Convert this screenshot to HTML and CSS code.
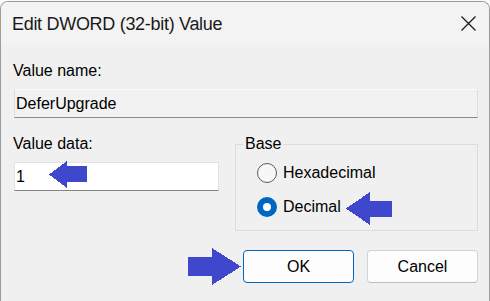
FILE: index.html
```html
<!DOCTYPE html>
<html lang="en">
<head>
  <meta charset="UTF-8">
  <title>Edit DWORD (32-bit) Value</title>
  <link rel="stylesheet" href="styles.css">
</head>
<body>

  <div class="dialog">
    <div class="titlebar">
      <span class="title">Edit DWORD (32-bit) Value</span>
      <svg class="close" width="15" height="15" viewBox="0 0 15 15">
        <path d="M0.5 0.5 L14.5 14.5 M14.5 0.5 L0.5 14.5" stroke="#1b1b1b" stroke-width="1.3" fill="none"/>
      </svg>
    </div>

    <div class="content">
      <div class="label">Value name:</div>
      <div class="field readonly">DeferUpgrade</div>

      <div class="row">
        <div class="col-data">
          <div class="label">Value data:</div>
          <div class="field">1</div>
        </div>

        <fieldset class="base">
          <legend>Base</legend>
          <div class="radio">
            <span class="dot"></span>
            <span>Hexadecimal</span>
          </div>
          <div class="radio checked">
            <span class="dot"></span>
            <span>Decimal</span>
          </div>
        </fieldset>
      </div>

      <div class="buttons">
        <div class="btn primary">OK</div>
        <div class="btn">Cancel</div>
      </div>
    </div>
  </div>

  <!-- annotation arrows drawn over the dialog -->
  <svg class="arrow arrow-data" width="38" height="27" viewBox="0 0 38 27" shape-rendering="crispEdges">
    <polygon points="0,13.5 18,0 18,5 38,5 38,21 18,21 18,27"/>
  </svg>
  <svg class="arrow arrow-decimal" width="46" height="33" viewBox="0 0 46 33" shape-rendering="crispEdges">
    <polygon points="0,16.5 24,0 24,9 46,9 46,25 24,25 24,33"/>
  </svg>
  <svg class="arrow arrow-ok" width="53" height="37" viewBox="0 0 53 37" shape-rendering="crispEdges">
    <polygon points="0,9 24,9 24,0 53,18.5 24,37 24,28 0,28"/>
  </svg>

</body>
</html>
```

FILE: styles.css
```css
body {
  margin: 0;
  padding: 0;
  font-family: 'Liberation Sans', Arial, sans-serif;
  background-color: #fafafa;
  color: #000;
  position: relative;
  overflow: hidden;
}

.dialog {
  box-sizing: border-box;
  width: 490px;
  height: 300px;
  margin-top: 1px;
  border: 1px solid #9c9c9c;
  border-bottom: none;
  border-radius: 8px 8px 0 0;
  background-color: #f0f0f0;
  overflow: hidden;
}

.titlebar {
  height: 43px;
  display: flex;
  align-items: center;
  justify-content: space-between;
  padding: 0 13px 0 11px;
  background-color: #f3f3f3;
}

.title {
  font-size: 18px;
  line-height: 18px;
  letter-spacing: -0.3px;
  color: #1a1a1a;
}

.close {
  display: block;
}

.content {
  padding: 0 11px 0 13px;
}

.label {
  font-size: 16px;
  line-height: 16px;
  margin-left: -1px;
}

.content > .label {
  margin-top: 18px;
}

.field {
  box-sizing: border-box;
  height: 29px;
  margin-top: 10px;
  padding: 0 1px;
  display: flex;
  align-items: center;
  font-size: 16px;
  background-color: #fff;
  border: 1px solid #e3e3e3;
  border-bottom-color: #848484;
}

.field.readonly {
  background-color: #f2f2f2;
  border-color: #dedede;
  border-top-color: #fbfbfb;
  border-bottom-color: #8a8a8a;
}

.row {
  display: flex;
  align-items: flex-start;
  gap: 16px;
  margin-top: 18px;
}

.col-data {
  width: 205px;
}

.base {
  box-sizing: border-box;
  width: 243px;
  margin: 0;
  padding: 11px 0 13px 7px;
  border: 1px solid #dcdcdc;
  min-width: 0;
}

.base legend {
  padding: 0 2px;
  font-size: 16px;
  line-height: 16px;
}

.radio {
  display: flex;
  align-items: center;
  gap: 6px;
  height: 20px;
  margin-left: 14px;
  font-size: 16px;
}

.radio + .radio {
  margin-top: 14px;
}

.dot {
  box-sizing: border-box;
  width: 20px;
  height: 20px;
  border-radius: 50%;
  border: 1px solid #5b5b5b;
  background-color: #f7f7f7;
}

.radio.checked .dot {
  border: 6px solid #0067c0;
  background-color: #fff;
}

.buttons {
  display: flex;
  justify-content: flex-end;
  gap: 13px;
  margin-top: 19px;
}

.btn {
  box-sizing: border-box;
  width: 111px;
  height: 33px;
  display: flex;
  align-items: center;
  justify-content: center;
  font-size: 16px;
  background-color: #fdfdfd;
  border: 1px solid #d3d3d3;
  border-bottom-color: #bdbdbd;
  border-radius: 4px;
}

.btn.primary {
  border-color: #0067c0;
}

.arrow {
  position: absolute;
  fill: #3f48cc;
}

.arrow-data {
  left: 49px;
  top: 161px;
}

.arrow-decimal {
  left: 346px;
  top: 192px;
}

.arrow-ok {
  left: 188px;
  top: 248px;
}
```
